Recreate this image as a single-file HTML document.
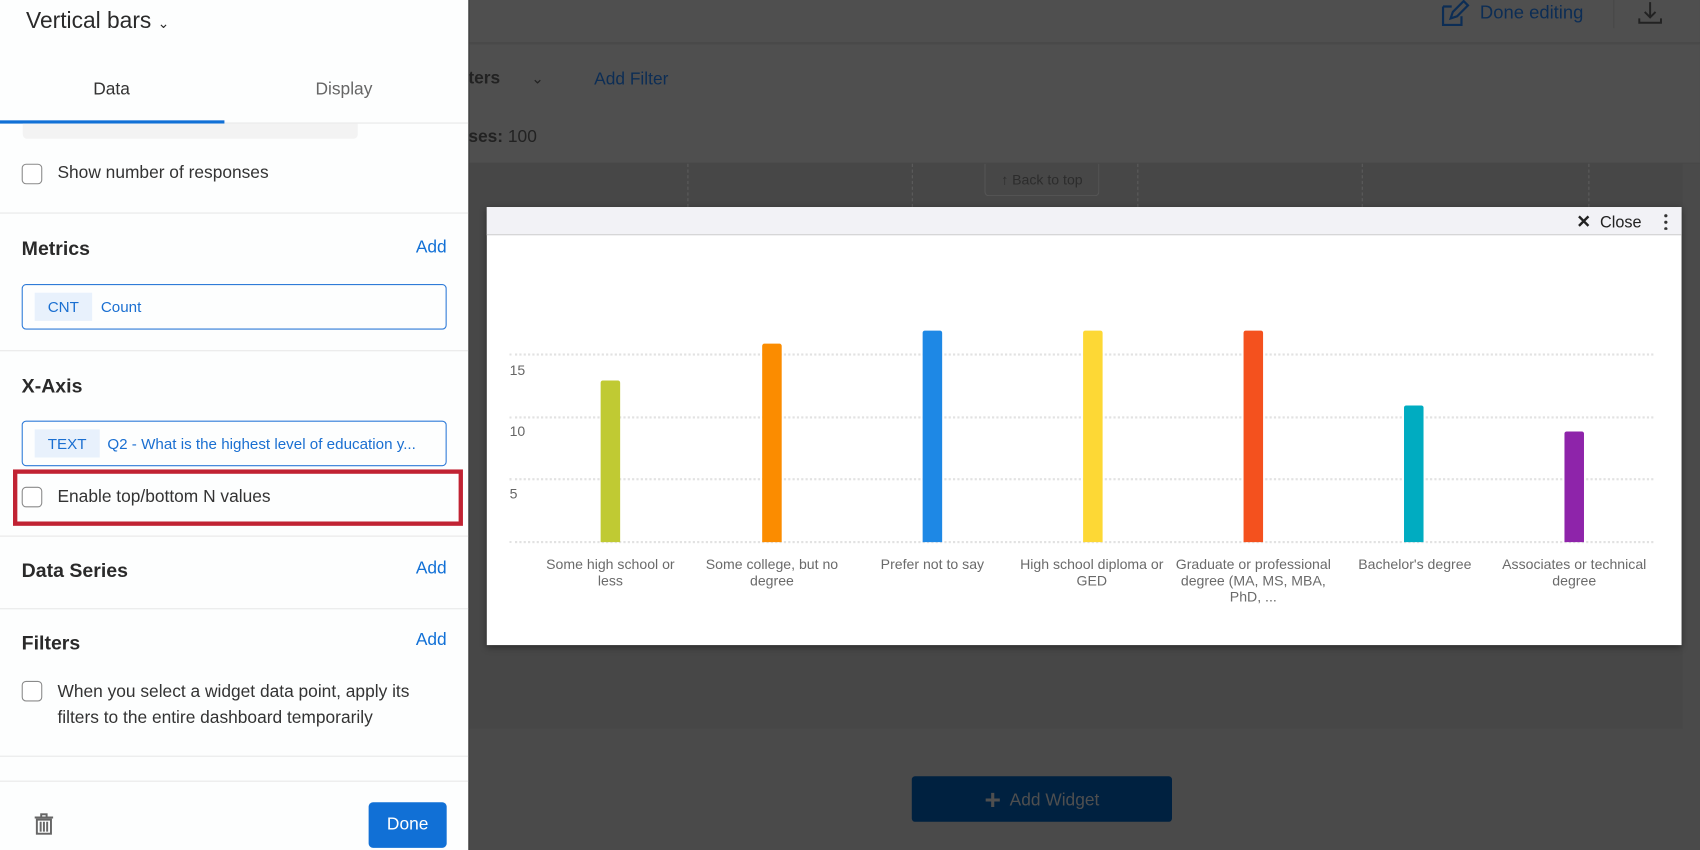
<!DOCTYPE html>
<html><head><meta charset="utf-8"><style>
*{box-sizing:border-box;margin:0;padding:0}
html,body{width:1700px;height:850px;overflow:hidden;background:#4b4b4b;font-family:"Liberation Sans",sans-serif}
#w{position:absolute;left:0;top:0;width:1568px;height:784px;transform:scale(1.08418);transform-origin:0 0;background:#4a4a4a}
.a{position:absolute}
.dash{border-left:1px dashed #5c5c5c}
.grid{position:absolute;left:470px;width:1055px;border-top:2px dotted #e2e2e2}
.yl{position:absolute;left:470px;font-size:13px;color:#666}
.bar{position:absolute;width:18px;height:auto;bottom:284px;border-radius:2px 2px 0 0}
.xl{position:absolute;top:513px;width:134px;text-align:center;font-size:13px;line-height:15px;color:#6a6a6a}
.cb{position:absolute;left:20px;width:19px;height:19px;border:1.5px solid #8a8a8a;border-radius:4px;background:#fff}
.lbl{position:absolute;left:53px;font-size:16px;color:#333}
.h{position:absolute;left:20px;font-size:18px;font-weight:bold;color:#2a2a2a}
.add{position:absolute;right:20px;font-size:16px;color:#1170d6}
.sep{position:absolute;left:0;width:432px;border-top:1px solid #e8e8e8}
.field{position:absolute;left:20px;width:392px;height:42px;border:1px solid #2f7bd8;border-radius:4px}
.tag{position:absolute;left:11px;top:7px;height:26px;background:#e8f1fc;color:#1a6fd1;font-size:14px;line-height:26px;padding:0 12px}
</style></head><body><div id="w">
<div class="a" style="left:432px;top:0;width:1136px;height:40px;background:#4f4f4f;border-bottom:1px solid #474747"></div>
<div class="a" style="left:432px;top:41px;width:1136px;height:110px;background:#4f4f4f;border-bottom:1px solid #474747"></div>
<div class="a" style="left:432px;top:151px;width:1120px;height:521px;background:#474747"></div>
<div class="a dash" style="left:634px;top:151px;height:40px"></div>
<div class="a dash" style="left:841px;top:151px;height:40px"></div>
<div class="a dash" style="left:1049px;top:151px;height:40px"></div>
<div class="a dash" style="left:1256px;top:151px;height:40px"></div>
<div class="a dash" style="left:1465px;top:151px;height:40px"></div>
<div class="a" style="left:908px;top:151px;width:106px;height:30px;border:1px solid #555;border-top:none;border-radius:0 0 4px 4px;color:#2c2c2c;font-size:13px;line-height:30px;text-align:center">↑ Back to top</div>
<div class="a" style="left:432px;top:64px;font-size:16px;font-weight:bold;color:#222">ters</div>
<div class="a" style="left:490px;top:64px;font-size:14px;color:#222">⌄</div>
<div class="a" style="left:548px;top:65px;font-size:16px;color:#0c2d55">Add Filter</div>
<div class="a" style="left:432px;top:118px;font-size:16px;color:#222"><b>ses:</b> 100</div>
<svg class="a" style="left:1328px;top:0" width="30" height="26" viewBox="0 0 30 26"><path d="M3 6h8M3 6v17h17v-8M10 17l2-6 10-10 4 4-10 10z" fill="none" stroke="#0c2d55" stroke-width="2"/></svg>
<div class="a" style="left:1365px;top:2px;font-size:17px;color:#0c2d55">Done editing</div>
<div class="a" style="left:1488px;top:0;height:26px;border-left:1px solid #474747"></div>
<svg class="a" style="left:1510px;top:0" width="24" height="24" viewBox="0 0 24 24"><path d="M12 2v14M7 11l5 5 5-5M2 17v4h20v-4" fill="none" stroke="#222" stroke-width="1.8"/></svg>
<div class="a" style="left:841px;top:716px;width:240px;height:42px;background:#002140;border-radius:3px;color:#4f4f4f;font-size:16px;line-height:42px;text-align:center"><span style="font-size:26px;font-weight:bold;vertical-align:-3px">+</span>&nbsp; Add Widget</div>

<div class="a" style="left:449px;top:191px;width:1102px;height:404px;background:#fff;box-shadow:0 2px 6px rgba(0,0,0,.4)">
 <div class="a" style="left:0;top:0;width:1102px;height:26px;background:#f2f2f6;border-bottom:1px solid #d0d0d0"></div>
 <div class="a" style="left:1005px;top:4px;font-size:15px;color:#222"><b style="font-size:16px">✕</b>&nbsp; Close</div>
 <div class="a" style="left:1086px;top:5px;width:3px;height:16px;background:radial-gradient(circle,#333 1.4px,transparent 1.6px) 0 0/3px 6px"></div>
</div>
<div class="grid" style="top:326px"></div>
<div class="grid" style="top:384px"></div>
<div class="grid" style="top:441px"></div>
<div class="grid" style="top:499px"></div>
<div class="yl" style="top:334px">15</div>
<div class="yl" style="top:390px">10</div>
<div class="yl" style="top:448px">5</div>
<div class="bar" style="left:554px;top:351px;background:#c0ca33"></div>
<div class="bar" style="left:703px;top:317px;background:#fb8c00"></div>
<div class="bar" style="left:851px;top:305px;background:#1e88e5"></div>
<div class="bar" style="left:999px;top:305px;background:#fdd835"></div>
<div class="bar" style="left:1147px;top:305px;background:#f4511e"></div>
<div class="bar" style="left:1295px;top:374px;background:#00acc1"></div>
<div class="bar" style="left:1443px;top:398px;background:#8e24aa"></div>
<div class="xl" style="left:496px">Some high school or less</div>
<div class="xl" style="left:645px">Some college, but no degree</div>
<div class="xl" style="left:793px">Prefer not to say</div>
<div class="xl" style="left:932px;width:150px">High school diploma or GED</div>
<div class="xl" style="left:1082px;width:148px">Graduate or professional degree (MA, MS, MBA, PhD, ...</div>
<div class="xl" style="left:1230px;width:150px">Bachelor's degree</div>
<div class="xl" style="left:1376px;width:152px">Associates or technical degree</div>

<div class="a" style="left:0;top:0;width:432px;height:784px;background:#fdfefe">
 <div class="a" style="left:24px;top:8px;font-size:21px;color:#2a2a2a">Vertical bars <span style="font-size:13px">⌄</span></div>
 <div class="a" style="left:86px;top:74px;font-size:16px;color:#333">Data</div>
 <div class="a" style="left:291px;top:74px;font-size:16px;color:#666">Display</div>
 <div class="sep" style="top:113px"></div>
 <div class="a" style="left:0;top:111px;width:207px;height:3px;background:#1170d6"></div>
 <div class="a" style="left:21px;top:114px;width:309px;height:14px;background:#f3f3f3;border-radius:0 0 4px 4px"></div>
 <div class="cb" style="top:151px"></div><div class="lbl" style="top:151px">Show number of responses</div>
 <div class="sep" style="top:196px"></div>
 <div class="h" style="top:219px">Metrics</div><div class="add" style="top:220px">Add</div>
 <div class="field" style="top:262px"><div class="tag">CNT</div><div class="a" style="left:72px;top:12px;font-size:14px;color:#1a6fd1">Count</div></div>
 <div class="sep" style="top:323px"></div>
 <div class="h" style="top:346px">X-Axis</div>
 <div class="field" style="top:388px"><div class="tag">TEXT</div><div class="a" style="left:78px;top:12px;font-size:14px;color:#1a6fd1;white-space:nowrap">Q2 - What is the highest level of education y...</div></div>
 <div class="a" style="left:12px;top:433px;width:415px;height:52px;border:4px solid #c12333"></div>
 <div class="cb" style="top:449px"></div><div class="lbl" style="top:450px">Enable top/bottom N values</div>
 <div class="sep" style="top:494px"></div>
 <div class="h" style="top:516px">Data Series</div><div class="add" style="top:516px">Add</div>
 <div class="sep" style="top:561px"></div>
 <div class="h" style="top:583px">Filters</div><div class="add" style="top:582px">Add</div>
 <div class="cb" style="top:628px"></div><div class="lbl" style="top:627px;line-height:24px;width:350px">When you select a widget data point, apply its filters to the entire dashboard temporarily</div>
 <div class="sep" style="top:697px"></div>
 <div class="sep" style="top:720px"></div>
 <svg class="a" style="left:31px;top:750px" width="19" height="20" viewBox="0 0 19 20"><path d="M1 4h17M7 4V1h5v3M3 6h13v13H3zM6.5 8v9M9.5 8v9M12.5 8v9" fill="none" stroke="#666" stroke-width="1.8"/></svg>
 <div class="a" style="left:340px;top:740px;width:72px;height:42px;background:#1170d6;border-radius:4px;color:#fff;font-size:16px;line-height:42px;text-align:center">Done</div>
</div>
<div class="a" style="left:432px;top:0;width:1px;height:784px;background:#3c3c3c"></div>
</div></body></html>
